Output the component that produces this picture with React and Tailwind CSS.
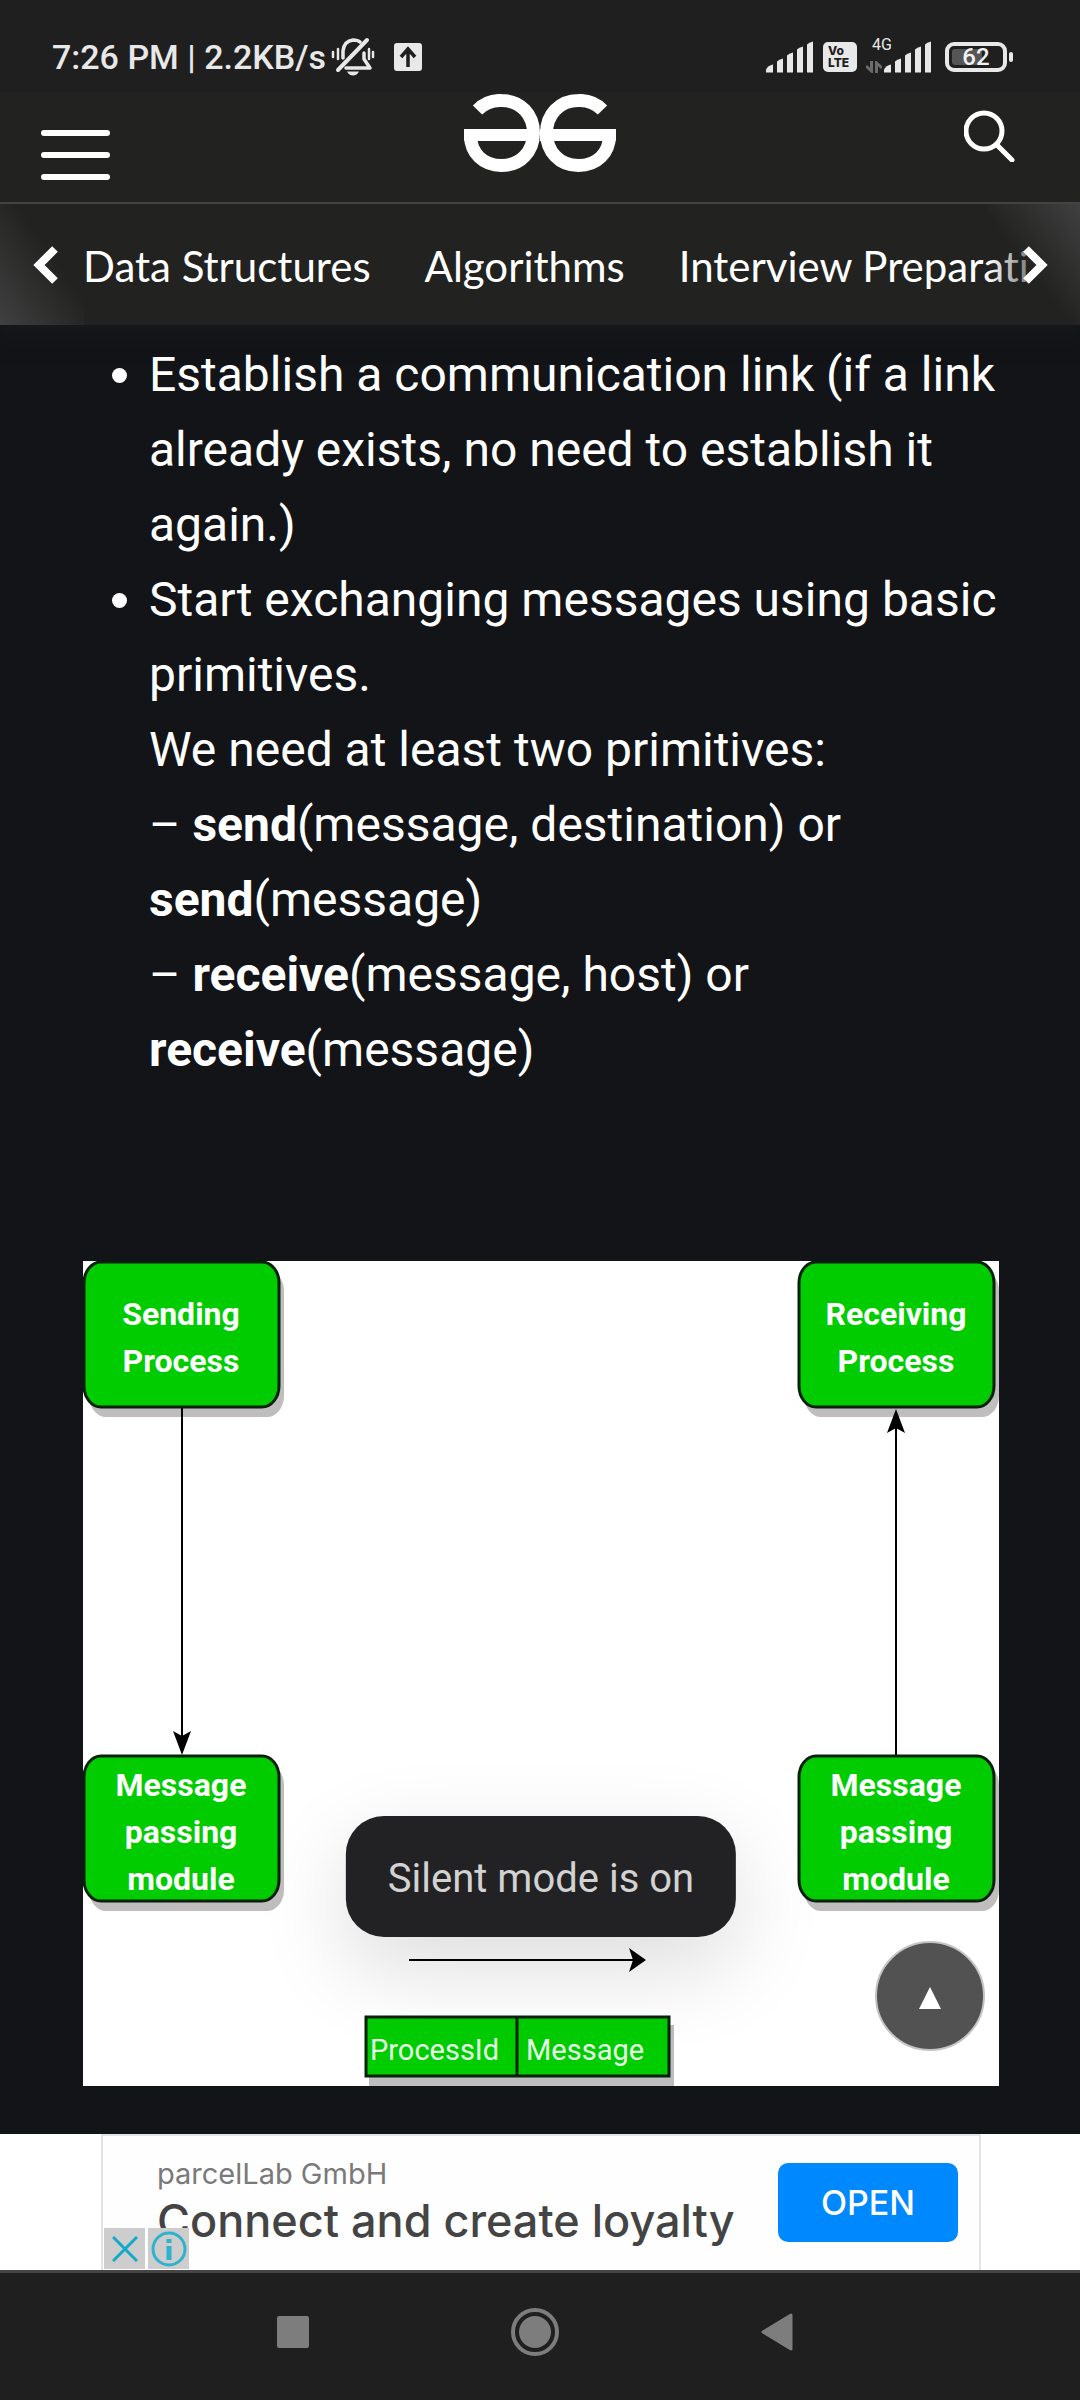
function MutedBellIcon() {
  return (
    <svg viewBox="0 0 44 40" className="h-10 w-11" fill="none" stroke="#e8e8e8" strokeWidth="3.500" strokeLinecap="round" aria-label="Silent mode">
      <path d="M12 21V14Q13 4 22 3Q27 3 29 5" />
      <path d="M33 16V22L39 31H15" strokeLinejoin="round" />
      <path d="M7 33L36 3" strokeWidth="4" />
      <path d="M2 15v5M7 12v10M38 12v10M42 15v5" strokeWidth="2.500" />
      <path d="M16 34.500H28Q26 38.500 22 38.500T16 34.500Z" fill="#e8e8e8" stroke="none" />
    </svg>
  );
}

function UploadIcon() {
  return (
    <svg viewBox="0 0 28 28" className="size-7" aria-label="Uploading">
      <rect width="28" height="28" rx="3" fill="#e8e8e8" />
      <path d="M14 24V7M7 14L14 6L21 14" fill="none" stroke="#1f1f20" strokeWidth="3.500" />
    </svg>
  );
}

function SignalIcon() {
  return (
    <svg viewBox="0 0 48 31" className="h-8 w-12" fill="#e8e8e8" aria-label="Signal">
      <path d="M0 31V28Q2 24 7 23V31Z" />
      <path d="M11 31V20Q13 18 17 17V31Z" />
      <path d="M21 31V14Q23 12 27 11V31Z" />
      <path d="M31 31V8Q33 6 37 5V31Z" />
      <path d="M41 31V3Q43 1 47 0V31Z" />
    </svg>
  );
}

function DataArrowsIcon() {
  return (
    <svg viewBox="0 0 16 12" className="h-3 w-4" fill="none" stroke="#6b6b6b" strokeWidth="3" aria-hidden="true">
      <path d="M5.500 0V10L0 5M10.500 12V2L16 7" />
    </svg>
  );
}

function BatteryIcon() {
  return (
    <div className="flex items-center gap-[2px]">
      <div className="relative flex h-[30px] w-[62px] items-center justify-center rounded-[9px] border-4 border-[#e8e8e8]">
        <span className="absolute inset-y-[3px] left-[3px] w-[30px] rounded-[3px] bg-[#555]" />
        <span className="relative text-2xl leading-none font-medium text-[#f0f0f0]">62</span>
      </div>
      <span className="h-[10px] w-1 rounded-sm bg-[#e8e8e8]" />
    </div>
  );
}

function StatusBar() {
  return (
    <div className="flex h-[92px] items-center justify-between bg-[#1f1f20] pt-[22px] pr-[67px] pl-[52px] text-[#e8e8e8]">
      <div className="flex items-center">
        <span className="text-[34px] leading-10 font-medium">7:26 PM | 2.2KB/s</span>
        <span className="ml-[5px]"><MutedBellIcon /></span>
        <span className="ml-[19px]"><UploadIcon /></span>
      </div>
      <div className="flex items-center">
        <SignalIcon />
        <span className="ml-[9px] flex h-[30px] w-[34px] flex-col items-center justify-center rounded-[5px] bg-[#e8e8e8] font-[Inter] text-[12px] leading-3 font-extrabold text-[#1f1f20]">
          <span className="w-6">Vo</span>
          <span className="w-6">LTE</span>
        </span>
        <div className="ml-[9px] flex items-end">
          <div className="relative flex h-8 w-[18px] items-end">
            <span className="absolute -top-1 left-[6px] text-[16px] leading-4">4G</span>
            <DataArrowsIcon />
          </div>
          <SignalIcon />
        </div>
        <span className="ml-[13px]"><BatteryIcon /></span>
      </div>
    </div>
  );
}

function Logo() {
  return (
    <svg viewBox="0 0 152 78" className="h-[78px] w-[152px]" fill="none" stroke="#fff" strokeWidth="13" role="img" aria-label="GeeksforGeeks">
      <path d="M13.500 16A32 32.500 0 0 1 37.500 6.500C57 6.500 69.500 21 69.500 39S57 71.500 37.500 71.500C19 71.500 6.500 59 6.500 41V36" />
      <path d="M0 41H66" strokeWidth="12" />
      <path d="M138.500 16A32 32.500 0 0 0 114.500 6.500C95 6.500 82.500 21 82.500 39S95 71.500 114.500 71.500C133 71.500 145.500 59 145.500 41V36" />
      <path d="M152 41H76" strokeWidth="12" />
    </svg>
  );
}

function Header() {
  return (
    <header className="grid h-[112px] grid-cols-[1fr_auto_1fr] items-start border-b-2 border-[#434343] bg-[#222221] pr-[64px] pl-[64px]">
      <button type="button" aria-label="Menu" className="mt-[38px] -ml-[23px] flex w-[69px] flex-col gap-4">
        <span className="h-[6px] w-full rounded-full bg-white" />
        <span className="h-[6px] w-full rounded-full bg-white" />
        <span className="h-[6px] w-full rounded-full bg-white" />
      </button>
      <a href="#home" className="mt-[2px]"><Logo /></a>
      <button type="button" aria-label="Search" className="mt-[18px] justify-self-end">
        <svg viewBox="0 0 52 52" className="size-13" fill="none" stroke="#fff" strokeWidth="5" strokeLinecap="round">
          <circle cx="20" cy="21" r="18" />
          <path d="M33 35L48 50" />
        </svg>
      </button>
    </header>
  );
}

function TopicNav() {
  return (
    <nav className="relative h-[121px] overflow-hidden bg-[#222221]">
      <div className="flex h-full items-center gap-[54px] pt-[2px] pl-[83px] font-[Lato] text-[42px] leading-[48px] whitespace-nowrap text-white [font-variant-ligatures:none]">
        <a href="#data-structures">Data Structures</a>
        <a href="#algorithms">Algorithms</a>
        <a href="#interview">Interview Preparati</a>
      </div>
      <button type="button" aria-label="Previous topics" className="absolute inset-y-0 left-0 flex w-[84px] items-center bg-linear-to-tr from-[#404040] to-transparent to-60% pl-[33px]">
        <svg viewBox="0 0 26 38" className="h-[38px] w-[26px]" fill="none" stroke="#fff" strokeWidth="8"><path d="M22 3L6 19L22 35" /></svg>
      </button>
      <div className="pointer-events-none absolute inset-y-0 right-0 w-[92px] bg-linear-to-r from-transparent to-[#222221] to-75%" />
      <button type="button" aria-label="Next topics" className="absolute inset-y-0 right-0 flex w-[92px] items-center justify-end bg-linear-to-bl from-[#404040] to-transparent to-55% pr-[32px]">
        <svg viewBox="0 0 26 38" className="h-[38px] w-[26px]" fill="none" stroke="#fff" strokeWidth="8"><path d="M4 3L20 19L4 35" /></svg>
      </button>
    </nav>
  );
}

function DiagramBox({ x, y, lines, baseline }) {
  return (
    <g>
      <rect x={x + 6} y={y + 9} width="195" height="147" rx="17" ry="21" fill="#bfbdbd" />
      <rect x={x + 1} y={y + 1} width="195" height="145" rx="17" ry="21" fill="#00cc00" stroke="#06210a" strokeWidth="3" />
      <g fill="#fff" fontSize="32" fontWeight="700" textAnchor="middle">
        {lines.map((line, i) => (
          <text key={line} x={x + 98} y={baseline + i * 47}>{line}</text>
        ))}
      </g>
    </g>
  );
}

function MessagePassingDiagram() {
  return (
    <svg viewBox="0 0 916 825" className="block w-full bg-white" role="img" aria-label="Message passing between two processes">
      <DiagramBox x={0} y={0} lines={["Sending", "Process"]} baseline={64} />
      <DiagramBox x={715} y={0} lines={["Receiving", "Process"]} baseline={64} />
      <DiagramBox x={0} y={494} lines={["Message", "passing", "module"]} baseline={535} />
      <DiagramBox x={715} y={494} lines={["Message", "passing", "module"]} baseline={535} />
      <g stroke="#000" strokeWidth="2">
        <path d="M99 147V480M813 494V165M326 699H552" />
      </g>
      <g fill="#000">
        <path d="M99 494L90 470L99 475L108 470Z" />
        <path d="M813 148L804 172L813 167L822 172Z" />
        <path d="M563 699L546 687L550 699L546 711Z" />
      </g>
      <rect x="286" y="764" width="305" height="61" fill="#bdbdbd" />
      <g fill="#00cc00" stroke="#06210a" strokeWidth="3">
        <rect x="283" y="756" width="303" height="59" />
        <path d="M434 756V815" />
      </g>
      <g fill="#e6ffe6" fontSize="29">
        <text x="287" y="799">ProcessId</text>
        <text x="443" y="799">Message</text>
      </g>
    </svg>
  );
}

function Article() {
  return (
    <main className="relative z-0 grow bg-[#131417] pr-[81px] pb-12 pl-[83px]">
      <ul className="list-disc pt-3 pl-[66px] text-[48px] leading-[75px] text-white">
        <li>Establish a communication link (if a link already exists, no need to establish it again.)</li>
        <li>
          Start exchanging messages using basic primitives.
          <br />
          We need at least two primitives:
          <br />– <strong>send</strong>(message, destination) or <strong>send</strong>(message)
          <br />– <strong>receive</strong>(message, host) or <strong>receive</strong>(message)
        </li>
      </ul>
      <figure className="relative mt-[174px]">
        <MessagePassingDiagram />
        <div role="status" className="absolute bottom-[149px] left-1/2 -translate-x-1/2 rounded-[38px] bg-[#222224] px-[42px] pt-[37px] pb-[33px] text-[40px] leading-[51px] whitespace-nowrap text-[#d2d2d2] shadow-[0_30px_90px_rgba(0,0,0,0.14)]">
          Silent mode is on
        </div>
        <button type="button" aria-label="Back to top" className="absolute right-[14px] bottom-[35px] flex size-[110px] items-center justify-center rounded-full border-2 border-[#c4c4c4] bg-[#525252]">
          <svg viewBox="0 0 22 22" className="mt-1 size-[22px]" fill="#fff"><path d="M11 0L22 22H0Z" /></svg>
        </button>
      </figure>
    </main>
  );
}

function AdBanner() {
  return (
    <aside className="bg-white pr-[99px] pl-[101px]">
      <div className="relative flex h-[136px] items-start justify-between border-2 border-b-0 border-[#e2e4e6] bg-[#fefefe] pr-[21px] pl-[54px] font-[Inter]">
        <div className="pt-[18px]">
          <p className="text-[29px] leading-10 text-[#7a7a7a]">parcelLab GmbH</p>
          <p className="text-[45px] leading-[54px] font-medium text-[#444]">Connect and create loyalty</p>
        </div>
        <button type="button" className="mt-[27px] h-[79px] w-[180px] rounded-[10px] bg-[#0088ff] text-[34px] font-medium text-white">OPEN</button>
        <div className="absolute bottom-[1px] left-[1px] flex gap-[3px]">
          <button type="button" aria-label="Close ad" className="flex h-[41px] w-[41px] items-center justify-center bg-[#cdcdcd]">
            <svg viewBox="0 0 26 26" className="size-[26px]" fill="none" stroke="#12aac8" strokeWidth="3"><path d="M1 1L25 25M25 1L1 25" /></svg>
          </button>
          <button type="button" aria-label="Ad information" className="flex h-[41px] w-[41px] items-center justify-center bg-[#cdcdcd]">
            <svg viewBox="0 0 36 36" className="size-9" fill="none" stroke="#2fb2cd" strokeWidth="3">
              <circle cx="18" cy="18" r="16" />
              <path d="M18 15V29M18 8V12" strokeWidth="5" />
            </svg>
          </button>
        </div>
      </div>
    </aside>
  );
}

function SystemNav() {
  return (
    <footer className="flex h-[130px] items-center justify-center gap-[202px] border-t-3 border-[#444544] bg-[#1f1f1f] pr-[10px] pb-[9px]">
      <button type="button" aria-label="Recent apps" className="size-8 rounded-xs bg-[#7d7d7d]" />
      <button type="button" aria-label="Home" className="size-12">
        <svg viewBox="0 0 48 48" className="size-12 text-[#7d7d7d]">
          <circle cx="24" cy="24" r="22" fill="none" stroke="currentColor" strokeWidth="4" />
          <circle cx="24" cy="24" r="16" fill="currentColor" />
        </svg>
      </button>
      <button type="button" aria-label="Back" className="h-[38px] w-8">
        <svg viewBox="0 0 32 38" className="h-[38px] w-8" fill="#7d7d7d" stroke="#7d7d7d" strokeWidth="3" strokeLinejoin="round"><path d="M2 19L30 2V36Z" /></svg>
      </button>
    </footer>
  );
}

export default function App() {
  return (
    <div className="flex min-h-screen flex-col bg-[#131417] font-[Roboto,sans-serif]">
      <div className="relative z-10 shadow-[0_0_26px_#26262688]">
        <StatusBar />
        <Header />
        <TopicNav />
      </div>
      <Article />
      <AdBanner />
      <SystemNav />
    </div>
  );
}
